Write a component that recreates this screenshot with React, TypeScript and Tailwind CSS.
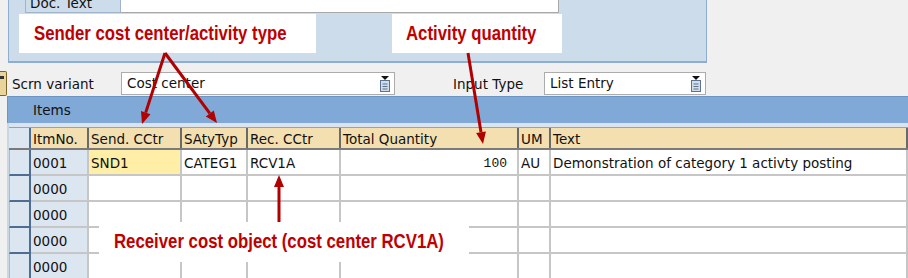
import React from "react";

function Picker() {
  return (
    <svg width="12" height="16" viewBox="0 0 12 16">
      <polygon points="2,0 10,0 6,4" fill="#111" />
      <rect x="1.5" y="4.5" width="9" height="11" fill="#d3dde8" stroke="#5b7391" />
      <line x1="3.5" y1="8" x2="8.5" y2="8" stroke="#5b7391" />
      <line x1="3.5" y1="10.5" x2="8.5" y2="10.5" stroke="#5b7391" />
      <line x1="3.5" y1="13" x2="8.5" y2="13" stroke="#5b7391" />
    </svg>
  );
}

function Field({ w, text }: { w: string; text: string }) {
  return (
    <div className={`${w} h-[23px] bg-white border border-[#acacac] flex items-center justify-between pl-[5px] pr-[3px]`}>
      <span className="leading-none pt-[1px]">{text}</span>
      <Picker />
    </div>
  );
}

const COLS = "grid grid-cols-[22px_58px_93px_66px_93px_178px_32px_1fr]";

function Callout({ cls, text }: { cls: string; text: string }) {
  return (
    <div className={`absolute bg-white flex items-center ${cls}`}>
      <span className="inline-block origin-left scale-x-[0.86] whitespace-nowrap font-['Liberation_Sans',Arial,sans-serif] font-bold text-[19.5px] leading-none text-[#c00000]">
        {text}
      </span>
    </div>
  );
}

export default function App() {
  const rows = [
    { no: "0001", s: "SND1", t: "CATEG1", r: "RCV1A", q: "100", um: "AU", tx: "Demonstration of category 1 activty posting" },
    { no: "0000" },
    { no: "0000" },
    { no: "0000" },
    { no: "0000" },
  ] as { no: string; s?: string; t?: string; r?: string; q?: string; um?: string; tx?: string }[];
  const cell = "border-r-2 border-b-2 border-[#c6c6c6] pl-[2px] pt-[3px] flex items-center whitespace-nowrap overflow-hidden";
  const head = "bg-[#f3dfb0] border-r-2 border-[#6a6a6a] pl-[2px] pt-[2px] flex items-center whitespace-nowrap overflow-hidden";
  return (
    <div className="relative w-[908px] h-[278px] overflow-hidden bg-[#f0f0f0] text-[13.5px] text-[#111] font-['DejaVu_Sans',sans-serif]">
      {/* top panel */}
      <div className="ml-[8px] w-[699px] h-[63px] bg-[#cddcea] border-x border-b-2 border-[#8eaed0]">
        <div className="flex h-[13px] pl-[16px]">
          <div className="w-[96px] h-[13px] overflow-hidden border-x border-b border-[#9fb4ca] pl-[4px]">
            <div className="-mt-[4px] leading-[14px]">Doc. Text</div>
          </div>
          <div className="w-[438px] h-[13px] bg-white border-r border-b border-[#a9a9a9]" />
        </div>
      </div>

      {/* selection row */}
      <div className="flex items-center h-[33px] pt-[9px] pb-[1px]">
        <div className="w-[7px] h-[25px] bg-[#e9d59c] border border-l-0 border-[#7a6228] rounded-r-[2px] relative">
          <div className="absolute top-[4px] left-0 w-[4px] h-[3px] bg-[#333]" />
        </div>
        <span className="ml-[5px] w-[109px] leading-none pt-[3px]">Scrn variant</span>
        <Field w="w-[274px]" text="Cost center" />
        <span className="ml-[58px] w-[91px] leading-none pt-[3px]">Input Type</span>
        <Field w="w-[162px]" text="List Entry" />
      </div>

      {/* items bar */}
      <div className="ml-[7px] h-[27px] bg-[#80a9d8] border-t border-l border-[#6d95c4] flex items-center pl-[25px]">
        <span className="leading-none pt-[2px]">Items</span>
      </div>

      {/* table */}
      <div className="ml-[7px] border-l-2 border-[#c9d6e3] pt-[4px] bg-[#dae4ef]">
        <div className={`${COLS} h-[23px] border-t border-b-2 border-[#7a7a7a] border-t-[#a0a0a0]`}>
          <div className="bg-[#dce6f1] border-r-2 border-[#4d6d93]" />
          <div className={head}>ItmNo.</div>
          <div className={head}>Send. CCtr</div>
          <div className={head}>SAtyTyp</div>
          <div className={head}>Rec. CCtr</div>
          <div className={head}>Total Quantity</div>
          <div className={head}>UM</div>
          <div className={`${head} border-r-0`}>Text</div>
        </div>
        {rows.map((r, i) => (
          <div key={i} className={`${COLS} h-[26px] bg-white`}>
            <div className="bg-[#dce6f1] border-r-2 border-b-2 border-[#4d6d93] border-l border-l-[#a9bdd2]" />
            <div className={`${cell} bg-[#dce6f1]`}>{r.no}</div>
            <div className={`${cell} ${i === 0 ? "bg-[#ffefa6]" : ""}`}>{r.s ?? ""}</div>
            <div className={cell}>{r.t ?? ""}</div>
            <div className={cell}>{r.r ?? ""}</div>
            <div className={`${cell} justify-end pr-[10px] font-['Liberation_Mono',monospace] text-[13px]`}>{r.q ?? ""}</div>
            <div className={cell}>{r.um ?? ""}</div>
            <div className={`${cell} border-r-0`}>{r.tx ?? ""}</div>
          </div>
        ))}
      </div>

      {/* callouts */}
      <Callout cls="left-[19px] top-[14px] w-[297px] h-[39px] pl-[15px]" text="Sender cost center/activity type" />
      <Callout cls="left-[392px] top-[14px] w-[170px] h-[39px] pl-[14px]" text="Activity quantity" />
      <Callout cls="left-[99px] top-[222px] w-[370px] h-[40px] pl-[15px]" text="Receiver cost object (cost center RCV1A)" />

      <svg className="absolute left-0 top-0 pointer-events-none" width="908" height="278" viewBox="0 0 908 278">
        <g stroke="#b00000" strokeWidth="3" fill="none">
          <line x1="165" y1="53" x2="145.7" y2="112.6" />
          <line x1="165" y1="53" x2="209.8" y2="113.4" />
          <line x1="468" y1="53" x2="481" y2="132.2" />
          <line x1="279" y1="222" x2="279" y2="187" />
        </g>
        <g fill="#b00000">
          <polygon points="142,124 150.5,114.2 141,111" />
          <polygon points="217,123 205.8,116.4 213.8,110.4" />
          <polygon points="483,144 476.1,133 485.9,131.4" />
          <polygon points="279,175 274,187 284,187" />
        </g>
      </svg>
    </div>
  );
}
